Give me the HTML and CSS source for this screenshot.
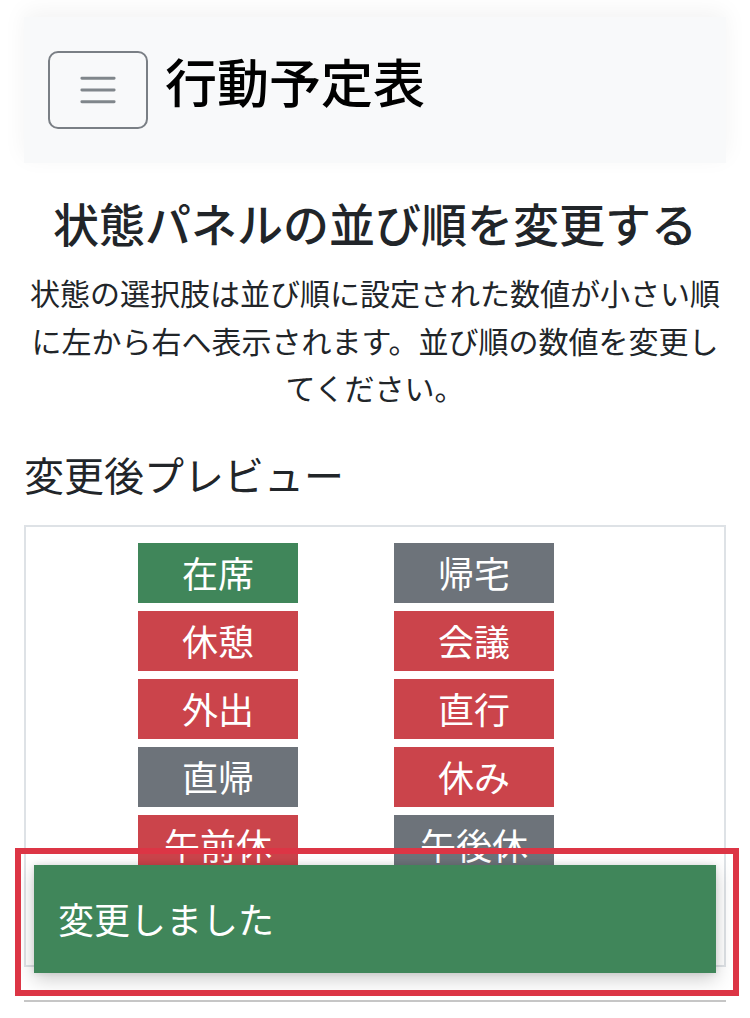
FILE: index.html
```html
<!DOCTYPE html>
<html lang="ja">
<head>
<meta charset="utf-8">
<title>行動予定表</title>
<link rel="stylesheet" href="styles.css">
</head>
<body>
<div class="page">
  <nav class="navbar">
    <button class="toggler" type="button" aria-label="メニュー">
      <svg class="toggler-icon" viewBox="0 0 30 30" width="44" height="44" aria-hidden="true">
        <path d="M4 7h22M4 15h22M4 23h22" stroke="#80868b" stroke-width="2" stroke-linecap="round" fill="none"/>
      </svg>
    </button>
    <span class="brand">行動予定表</span>
  </nav>

  <h3 class="page-title">状態パネルの並び順を変更する</h3>
  <p class="lead-text">状態の選択肢は並び順に設定された数値が小さい順に左から右へ表示されます。並び順の数値を変更してください。</p>

  <h4 class="section-title">変更後プレビュー</h4>
  <div class="preview">
    <div class="badge green">在席</div>
    <div class="badge gray">帰宅</div>
    <div class="badge red">休憩</div>
    <div class="badge red">会議</div>
    <div class="badge red">外出</div>
    <div class="badge red">直行</div>
    <div class="badge gray">直帰</div>
    <div class="badge red">休み</div>
    <div class="badge red">午前休</div>
    <div class="badge gray">午後休</div>
  </div>
  <div class="divider"></div>
</div>

<div class="toast">変更しました</div>
<div class="highlight"></div>
</body>
</html>
```

FILE: styles.css
```css
html, body {
  margin: 0;
  padding: 0;
  background: #ffffff;
}

body {
  font-family: "Noto Sans CJK JP", "Noto Sans", sans-serif;
  color: #212529;
  overflow: hidden;
}

.page {
  padding: 17px 24px 0;
}

.navbar {
  display: flex;
  align-items: center;
  gap: 17px;
  padding: 34px 24px;
  background: #f8f9fa;
  box-shadow: 0 -6px 22px rgba(0, 0, 0, 0.05);
}

.toggler {
  display: flex;
  align-items: center;
  justify-content: center;
  width: 100px;
  height: 78px;
  padding: 0;
  background: transparent;
  border: 2px solid #7a7f85;
  border-radius: 10px;
  box-sizing: border-box;
}

.toggler-icon {
  display: block;
}

.brand {
  font-size: 52px;
  line-height: 60px;
  padding-bottom: 18px;
  font-weight: 500;
  color: #000000;
}

.page-title {
  margin: 32px 0 19px;
  font-size: 46px;
  line-height: 55px;
  font-weight: 500;
  text-align: center;
}

.lead-text {
  margin: 0;
  font-size: 30px;
  line-height: 47.5px;
  text-align: center;
}

.section-title {
  margin: 38px 0 27.5px;
  font-size: 40px;
  line-height: 48px;
  font-weight: 400;
}

.preview {
  display: grid;
  grid-template-columns: 160px 160px;
  column-gap: 96px;
  row-gap: 8px;
  padding: 16px 0 90px 112px;
  border: 2px solid #dee2e6;
}

.badge {
  display: flex;
  align-items: center;
  justify-content: center;
  height: 60px;
  padding-bottom: 3px;
  box-sizing: border-box;
  color: #ffffff;
  font-size: 36px;
  line-height: 1;
}

.green { background: #40865a; }
.red { background: #cb444b; }
.gray { background: #6d737a; }

.divider {
  margin-top: 33px;
  border-top: 2px solid #c6c6c6;
}

.toast {
  position: absolute;
  left: 34px;
  top: 865px;
  width: 682px;
  height: 108px;
  display: flex;
  align-items: center;
  padding: 0 0 3px 24px;
  box-sizing: border-box;
  background: #40865a;
  color: #ffffff;
  font-size: 36px;
  box-shadow: 0 6px 18px rgba(0, 0, 0, 0.2), 0 0 6px rgba(0, 0, 0, 0.1);
}

.highlight {
  position: absolute;
  left: 15px;
  top: 848px;
  width: 724px;
  height: 148px;
  border: 6px solid #dc3545;
  box-sizing: border-box;
}
```
